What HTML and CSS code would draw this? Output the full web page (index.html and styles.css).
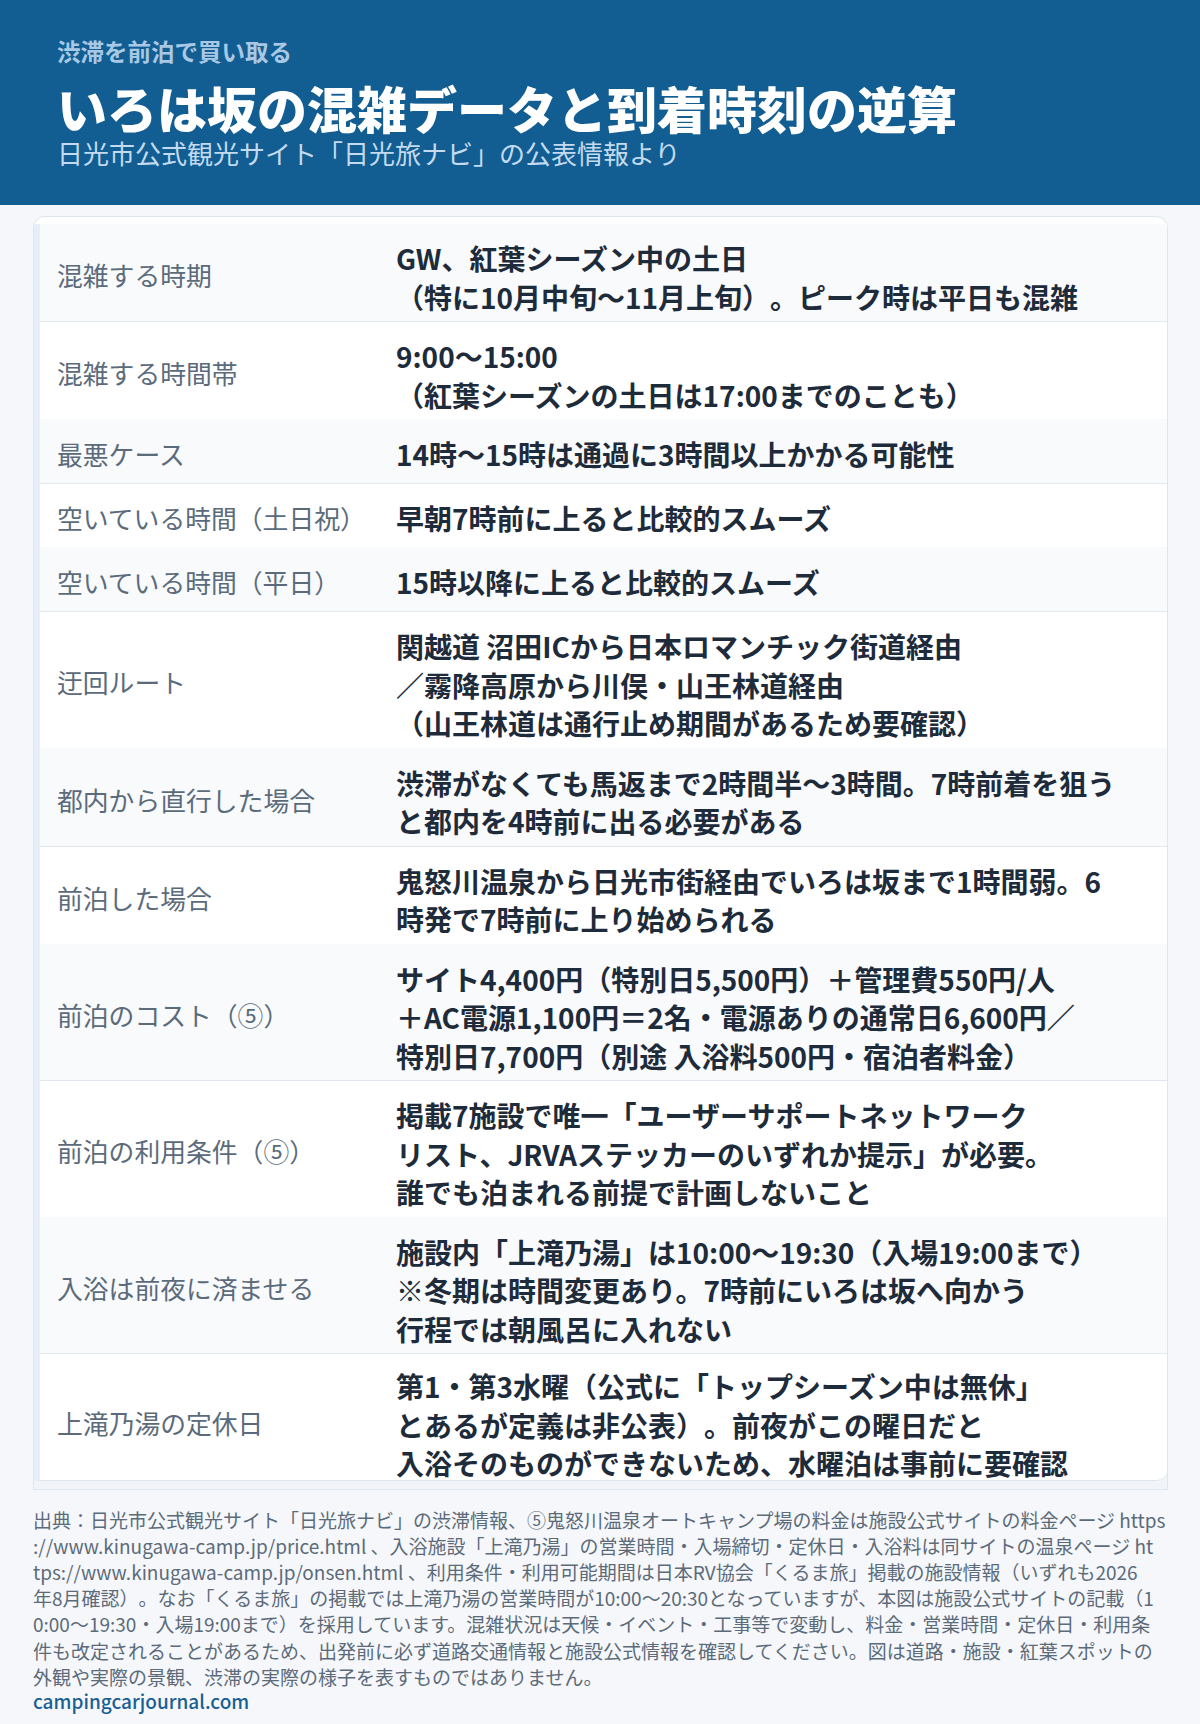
FILE: index.html
```html
<!DOCTYPE html>
<html lang="ja">
<head>
<meta charset="utf-8">
<title>いろは坂の混雑データと到着時刻の逆算</title>
<link rel="stylesheet" href="styles.css">
</head>
<body>
<header class="hero">
  <p class="kicker">渋滞を前泊で買い取る</p>
  <h1 class="title">いろは坂の混雑データと到着時刻の逆算</h1>
  <p class="sub">日光市公式観光サイト「日光旅ナビ」の公表情報より</p>
</header>
<main class="wrap">
  <section class="card">
    <div class="table">
      <div class="row"><div class="label">混雑する時期</div><div class="value">GW、紅葉シーズン中の土日<br>（特に10月中旬〜11月上旬）。ピーク時は平日も混雑</div></div>
      <div class="row"><div class="label">混雑する時間帯</div><div class="value">9:00〜15:00<br>（紅葉シーズンの土日は17:00までのことも）</div></div>
      <div class="row"><div class="label">最悪ケース</div><div class="value">14時〜15時は通過に3時間以上かかる可能性</div></div>
      <div class="row"><div class="label">空いている時間（土日祝）</div><div class="value">早朝7時前に上ると比較的スムーズ</div></div>
      <div class="row"><div class="label">空いている時間（平日）</div><div class="value">15時以降に上ると比較的スムーズ</div></div>
      <div class="row"><div class="label">迂回ルート</div><div class="value">関越道 沼田ICから日本ロマンチック街道経由<br>／霧降高原から川俣・山王林道経由<br>（山王林道は通行止め期間があるため要確認）</div></div>
      <div class="row"><div class="label">都内から直行した場合</div><div class="value">渋滞がなくても馬返まで2時間半〜3時間。7時前着を狙うと都内を4時前に出る必要がある</div></div>
      <div class="row"><div class="label">前泊した場合</div><div class="value">鬼怒川温泉から日光市街経由でいろは坂まで1時間弱。6時発で7時前に上り始められる</div></div>
      <div class="row"><div class="label">前泊のコスト（⑤）</div><div class="value">サイト4,400円（特別日5,500円）＋管理費550円/人<br>＋AC電源1,100円＝2名・電源ありの通常日6,600円／<br>特別日7,700円（別途 入浴料500円・宿泊者料金）</div></div>
      <div class="row"><div class="label">前泊の利用条件（⑤）</div><div class="value">掲載7施設で唯一「ユーザーサポートネットワーク<br>リスト、JRVAステッカーのいずれか提示」が必要。<br>誰でも泊まれる前提で計画しないこと</div></div>
      <div class="row"><div class="label">入浴は前夜に済ませる</div><div class="value">施設内「上滝乃湯」は10:00〜19:30（入場19:00まで）<br>※冬期は時間変更あり。7時前にいろは坂へ向かう<br>行程では朝風呂に入れない</div></div>
      <div class="row"><div class="label">上滝乃湯の定休日</div><div class="value">第1・第3水曜（公式に「トップシーズン中は無休」<br>とあるが定義は非公表）。前夜がこの曜日だと<br>入浴そのものができないため、水曜泊は事前に要確認</div></div>
    </div>
  </section>
  <footer class="note">
    <p class="source">出典：日光市公式観光サイト「日光旅ナビ」の渋滞情報、⑤鬼怒川温泉オートキャンプ場の料金は施設公式サイトの料金ページ https<br>://www.kinugawa-camp.jp/price.html 、入浴施設「上滝乃湯」の営業時間・入場締切・定休日・入浴料は同サイトの温泉ページ ht<br>tps://www.kinugawa-camp.jp/onsen.html 、利用条件・利用可能期間は日本RV協会「くるま旅」掲載の施設情報（いずれも2026<br>年8月確認）。なお「くるま旅」の掲載では上滝乃湯の営業時間が10:00〜20:30となっていますが、本図は施設公式サイトの記載（1<br>0:00〜19:30・入場19:00まで）を採用しています。混雑状況は天候・イベント・工事等で変動し、料金・営業時間・定休日・利用条<br>件も改定されることがあるため、出発前に必ず道路交通情報と施設公式情報を確認してください。図は道路・施設・紅葉スポットの<br>外観や実際の景観、渋滞の実際の様子を表すものではありません。</p>
    <a class="site" href="#">campingcarjournal.com</a>
  </footer>
</main>
</body>
</html>
```

FILE: styles.css
```css
* { box-sizing: border-box; }

body {
  margin: 0;
  background: #f5f7fa;
  font-family: "Noto Sans CJK JP", "Noto Sans", sans-serif;
  text-spacing-trim: space-all;
}

.hero {
  background: #125e93;
  padding: 36px 57px 37px;
}

.kicker {
  margin: 0;
  font-size: 23.5px;
  line-height: 30px;
  font-weight: 700;
  color: #a8c8e4;
}

.title {
  margin: 12px 0 0;
  font-size: 50px;
  line-height: 58px;
  font-weight: 900;
  color: #ffffff;
}

.sub {
  margin: 1px 0 0;
  font-size: 26px;
  line-height: 31px;
  font-weight: 400;
  color: #c4dbef;
}

.wrap {
  padding: 11px 32px 0 33px;
}

.card {
  border: 1px solid #dde5ee;
  border-radius: 12px 12px 0 0;
  background: linear-gradient(#ffffff 0 7px, #f1f5f9 7px);
  padding: 7px 0 8px;
}

.table {
  border-left: 6px solid #e6eef7;
  border-bottom: 1px solid #dde5ee;
  border-bottom-right-radius: 10px;
  background: #ffffff;
  overflow: hidden;
}

.row {
  display: grid;
  grid-template-columns: 356px 1fr;
  border-bottom: 1px solid #f8fafc;
}

.row:nth-child(odd) {
  background: #f8fafc;
  border-bottom-color: #e2e8f0;
}

.row:last-child {
  margin-bottom: -9px;
}

.row:last-child .value {
  padding-top: 13px;
}

.label {
  align-self: center;
  padding: 16px 0 12px 17px;
  font-size: 25.8px;
  line-height: 35px;
  color: #5b6b7b;
}

.value {
  padding: 15px 46px 5px 0;
  font-size: 28px;
  line-height: 38.5px;
  font-weight: 700;
  color: #1e2b3a;
}

.note {
  padding: 17px 0 0;
}

.source {
  margin: 0;
  font-size: 19px;
  line-height: 26.2px;
  color: #5c6b7a;
  white-space: nowrap;
}

.site {
  display: block;
  margin-top: -2px;
  font-size: 19px;
  line-height: 26px;
  font-weight: 500;
  color: #1a5f93;
  text-decoration: none;
}
```
